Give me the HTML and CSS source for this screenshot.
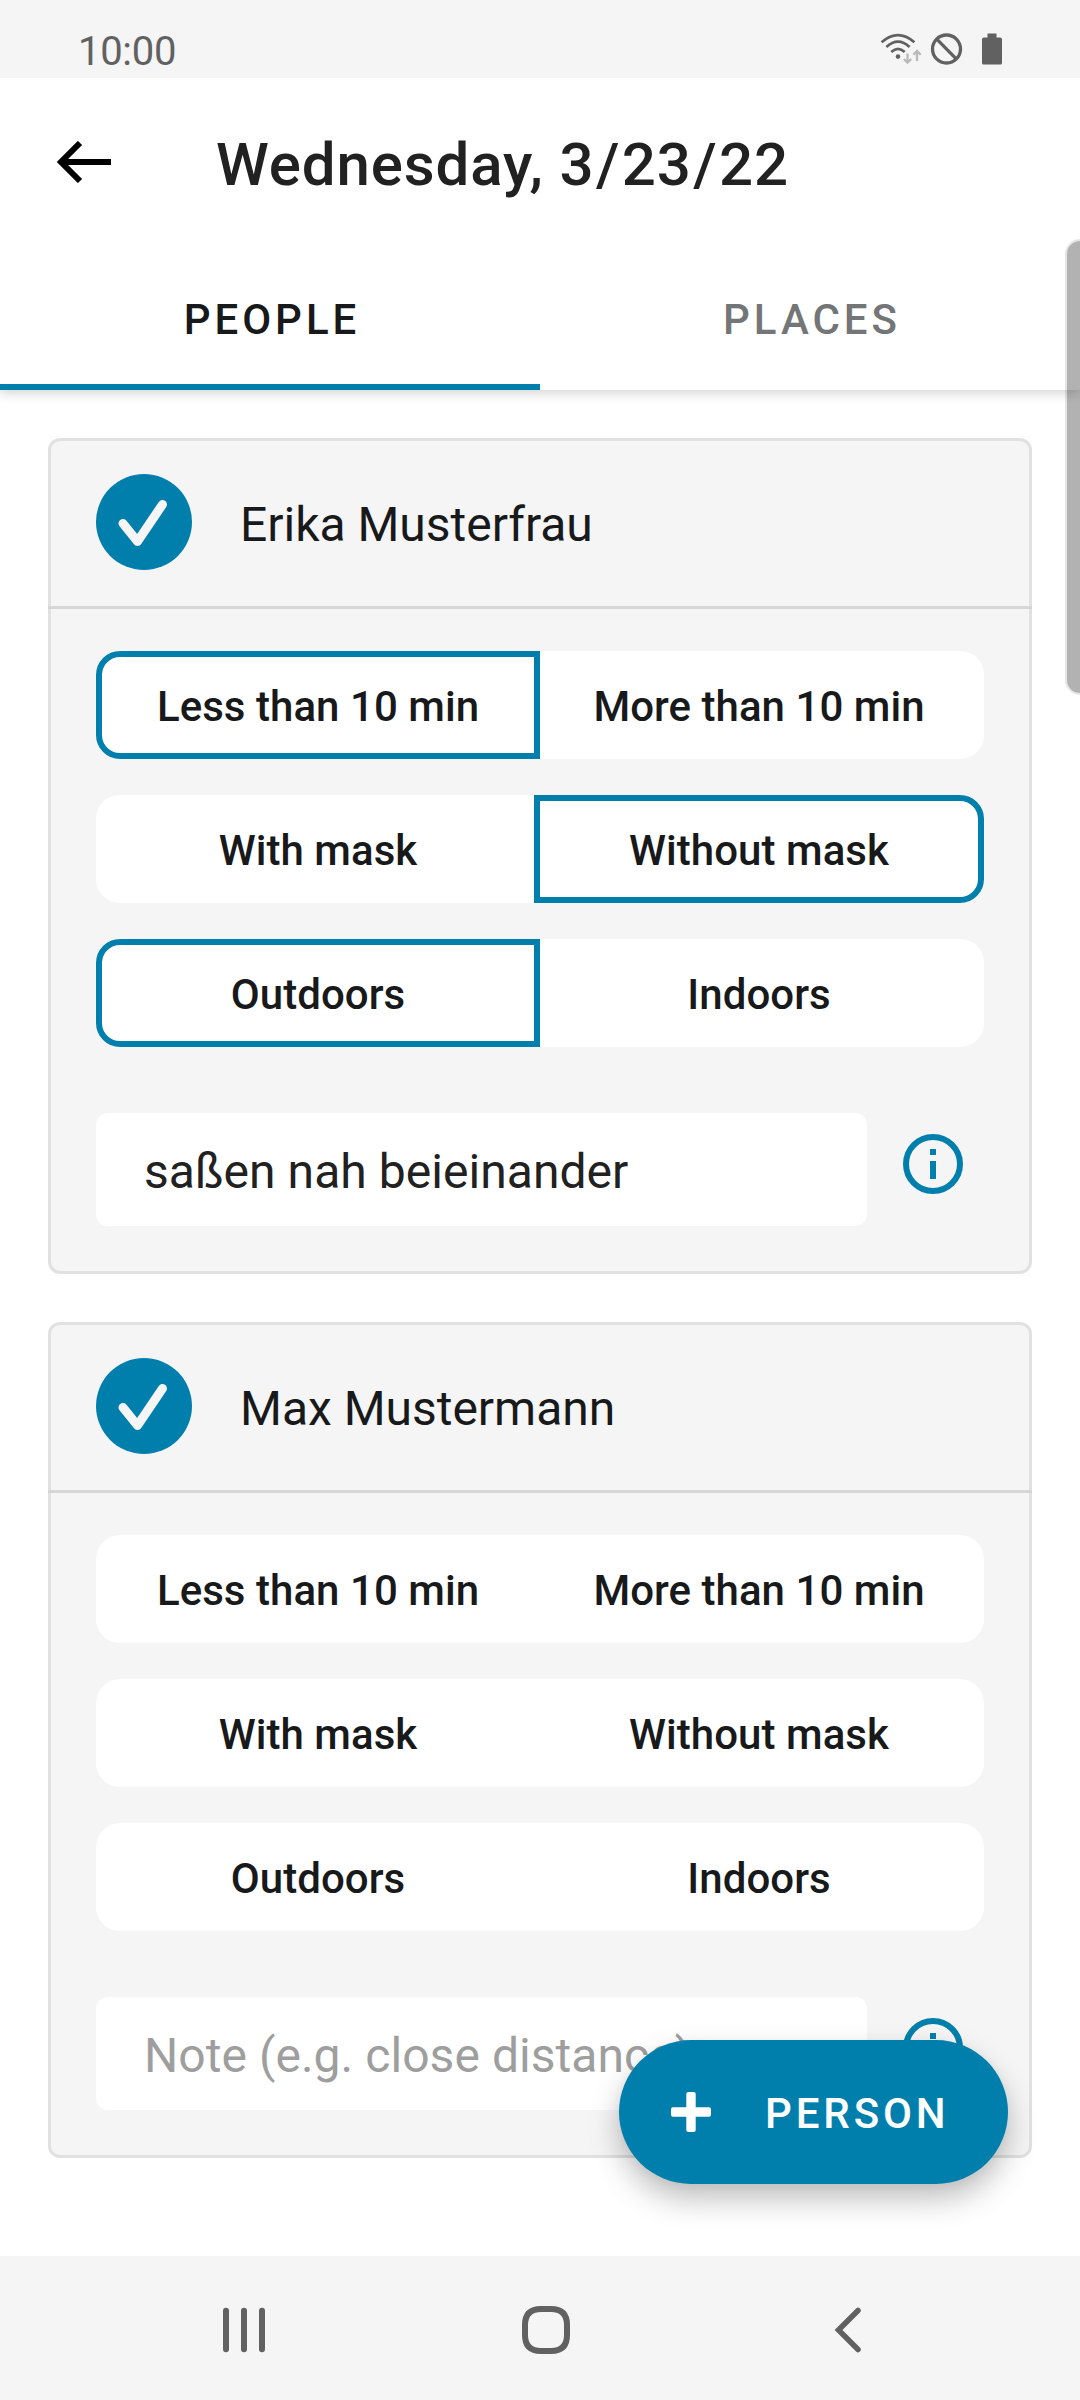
FILE: index.html
```html
<!DOCTYPE html>
<html lang="en">
<head>
<meta charset="utf-8">
<title>Contact diary</title>
<link rel="stylesheet" href="styles.css">
</head>
<body>
<div class="screen">
  <div class="status">
    <span class="time">10:00</span>
    <svg class="status-icons" width="124" height="36" viewBox="0 0 124 36">
      <g fill="none" stroke="#616161" stroke-width="2.7">
        <path d="M1.6 11.2Q18 -3 34.4 11.2M6.4 16Q18 5.400 29.600 16M11.300 21Q18 14.800 24.700 21"/>
        <circle cx="66.500" cy="18" r="14" stroke-width="3.300"/>
        <path d="M56.800 8.200L76.200 27.800" stroke-width="3.300"/>
      </g>
      <circle cx="18" cy="25.600" r="2.300" fill="#616161"/>
      <path d="M27.500 22.500v9M23.800 28l3.700 3.700 3.700-3.700M37 30v-9M33.300 23.700l3.700-3.700 3.700 3.700" fill="none" stroke="#bababa" stroke-width="2.300"/>
      <path d="M107.500 2.500h9v4h3.500q2 0 2 2v23.500q0 1.500-1.500 1.500h-17q-1.500 0-1.500-1.500V8.500q0-2 2-2h3.500z" fill="#616161"/>
    </svg>
  </div>

  <header class="appbar">
    <div class="titlebar">
      <svg class="back" width="54" height="42" viewBox="0 0 54 42" fill="none" stroke="#000" stroke-width="6"><path d="M54 21H5M23 2L4 21l19 19"/></svg>
      <h1 class="title">Wednesday, 3<span class="slash">/</span>23<span class="slash">/</span>22</h1>
    </div>
    <nav class="tabs">
      <div class="tab tab-active">PEOPLE</div>
      <div class="tab">PLACES</div>
    </nav>
  </header>

  <main class="list">
    <section class="card">
      <div class="card-head">
        <svg width="96" height="96" viewBox="0 0 96 96"><circle cx="48" cy="48" r="48" fill="#007fad"/><path d="M27 49.500L41.500 67.500L66.500 30.500" fill="none" stroke="#f5f5f5" stroke-width="9" stroke-linecap="round" stroke-linejoin="round"/></svg>
        <span class="name">Erika Musterfrau</span>
      </div>
      <div class="choices">
        <div class="choice"><span class="opt opt-left selected">Less than 10 min</span><span class="opt opt-right">More than 10 min</span></div>
        <div class="choice"><span class="opt opt-left">With mask</span><span class="opt opt-right selected">Without mask</span></div>
        <div class="choice"><span class="opt opt-left selected">Outdoors</span><span class="opt opt-right">Indoors</span></div>
      </div>
      <div class="note-row">
        <div class="note">saßen nah beieinander</div>
        <svg class="info" width="60" height="60" viewBox="0 0 60 60"><circle cx="30" cy="30" r="27" fill="none" stroke="#007fad" stroke-width="6"/><path d="M27 15h6v6h-6zM27 27h6v18h-6z" fill="#007fad"/></svg>
      </div>
    </section>

    <section class="card">
      <div class="card-head">
        <svg width="96" height="96" viewBox="0 0 96 96"><circle cx="48" cy="48" r="48" fill="#007fad"/><path d="M27 49.500L41.500 67.500L66.500 30.500" fill="none" stroke="#f5f5f5" stroke-width="9" stroke-linecap="round" stroke-linejoin="round"/></svg>
        <span class="name">Max Mustermann</span>
      </div>
      <div class="choices">
        <div class="choice"><span class="opt opt-left">Less than 10 min</span><span class="opt opt-right">More than 10 min</span></div>
        <div class="choice"><span class="opt opt-left">With mask</span><span class="opt opt-right">Without mask</span></div>
        <div class="choice"><span class="opt opt-left">Outdoors</span><span class="opt opt-right">Indoors</span></div>
      </div>
      <div class="note-row">
        <div class="note note-empty">Note (e.g. close distance)</div>
        <svg class="info" width="60" height="60" viewBox="0 0 60 60"><circle cx="30" cy="30" r="27" fill="none" stroke="#007fad" stroke-width="6"/><path d="M27 15h6v6h-6zM27 27h6v18h-6z" fill="#007fad"/></svg>
      </div>
    </section>
  </main>

  <footer class="sysnav">
    <svg width="44" height="48" viewBox="0 0 44 48" stroke="#616161" stroke-width="6" stroke-linecap="round"><path d="M4 4.800v38.400M22 4.800v38.400M40 4.800v38.400"/></svg>
    <svg class="nav-home" width="48" height="48" viewBox="0 0 48 48" fill="none" stroke="#616161" stroke-width="6"><path d="M24 3H29Q45 3 45 19V29Q45 45 29 45H19Q3 45 3 29V19Q3 3 19 3Z"/></svg>
    <svg width="28" height="48" viewBox="0 0 28 48" fill="none" stroke="#616161" stroke-width="5.500" stroke-linecap="round"><path d="M24 4.500L4.500 24L24 43.500"/></svg>
  </footer>

  <div class="fab">
    <svg width="40" height="40" viewBox="0 0 40 40" fill="#fff"><rect x="15.300" width="9.400" height="40" rx="2"/><rect y="15.300" width="40" height="9.400" rx="2"/></svg>
    <span class="fab-label">PERSON</span>
  </div>
  <div class="scrollbar"></div>
</div>
</body>
</html>
```
FILE: styles.css
```css
* { box-sizing: border-box; }
body { margin: 0; background: #fff; font-family: Roboto, "Liberation Sans", sans-serif; color: #18191a; }
svg { display: block; flex: none; }
.screen { position: relative; width: 1080px; height: 2400px; overflow: hidden; display: flex; flex-direction: column; background: #fff; }

.status { position: relative; z-index: 1; height: 78px; padding: 0 76px 0 78px; background: #f5f5f5; display: flex; justify-content: space-between; }
.time { padding-top: 28px; font-size: 40px; line-height: 48px; color: #616161; letter-spacing: -0.3px; }
.status-icons { margin-top: 31px; }

.appbar { position: relative; height: 312px; background: #fff; box-shadow: 0 3px 11px rgba(0, 0, 0, .18); }
.titlebar { height: 168px; display: flex; align-items: center; padding-left: 57px; }
.back { margin-right: 105px; }
.title { margin: 5px 0 0; font-size: 60px; line-height: 72px; font-weight: 500; color: #212121; letter-spacing: .87px; }
.slash { padding: 0 1.5px; }
.tabs { display: flex; height: 144px; }
.tab { flex: 1; padding: 49px 0 0 4px; text-align: center; font-size: 42px; line-height: 50px; font-weight: 500; letter-spacing: 4px; color: #747576; }
.tab-active { color: #18191a; border-bottom: 6px solid #007fad; }

.list { flex: 1; padding: 48px; display: flex; flex-direction: column; gap: 48px; }
.card { height: 836px; background: #f5f5f5; border: 3px solid #e1e1e1; border-radius: 12px; }
.card-head { height: 168px; margin: 0 -3px; padding: 33px 48px 0; border-bottom: 3px solid #d6d6d6; display: flex; gap: 48px; }
.name { padding-top: 23px; font-size: 48px; line-height: 56px; letter-spacing: -.02px; }
.choices { padding: 42px 45px 0; display: flex; flex-direction: column; gap: 36px; }
.choice { display: flex; height: 108px; border-radius: 24px; background: #fff; }
.opt { padding-top: 2px; text-align: center; font-size: 42px; line-height: 96px; font-weight: 500; border: 6px solid transparent; letter-spacing: .04px; }
.opt-left { width: 444px; border-radius: 24px 0 0 24px; }
.opt-right { width: 450px; margin-left: -6px; border-radius: 0 24px 24px 0; }
.selected { border-color: #007fad; }
.note-row { display: flex; padding: 66px 45px 0; gap: 36px; }
.note { width: 771px; height: 113px; padding: 31px 48px 0; border-radius: 12px; background: #fff; font-size: 48px; line-height: 56px; letter-spacing: .05px; color: #212121; white-space: nowrap; }
.note-empty { color: #9e9e9e; }
.info { margin-top: 21px; }

.sysnav { height: 144px; padding: 4px 0 0 222px; background: #f5f5f5; display: flex; align-items: center; }
.nav-home { margin: 0 264px 0 256px; }

.fab { position: absolute; left: 619px; top: 2040px; width: 389px; height: 144px; padding-left: 52px; border-radius: 72px; background: #007fad; color: #fff; display: flex; align-items: center; gap: 54px; box-shadow: 0 15px 30px rgba(0, 0, 0, .25), 0 2px 12px rgba(0, 0, 0, .04); }
.fab-label { padding-top: 3px; font-size: 42px; line-height: 50px; font-weight: 500; letter-spacing: 3.9px; }
.scrollbar { position: absolute; left: 1065px; top: 239px; width: 30px; height: 456px; border: 2px solid rgba(0, 0, 0, .1); border-radius: 15px; background: rgba(0, 0, 0, .3); background-clip: padding-box; }
```
